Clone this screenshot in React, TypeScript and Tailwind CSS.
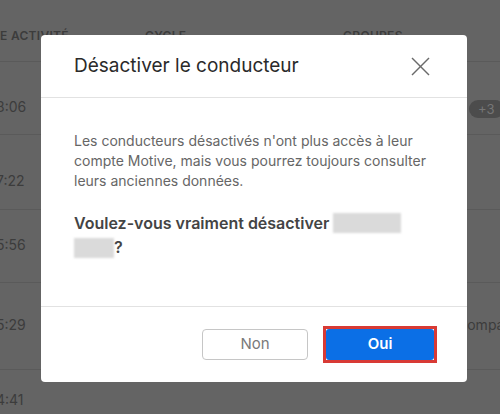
import React from "react";

export default function App() {
  const font = { fontFamily: "Inter, 'Noto Sans', sans-serif" };
  return (
    <div className="relative w-[500px] h-[414px] overflow-hidden bg-[#646464]" style={font}>
      {/* background table */}
      <div className="flex flex-col text-[#3c3c3c]">
        <div className="flex h-[62px] border-b border-[#5a5a5a] pt-[29px] text-[12px] font-semibold leading-[14px] tracking-wide">
          <div className="w-[145px] shrink-0">E ACTIVITÉ</div>
          <div className="w-[198px] shrink-0">CYCLE</div>
          <div className="whitespace-nowrap">GROUPES</div>
        </div>
        <div className="flex h-[73px] border-b border-[#5a5a5a] text-[14px] leading-[20px]">
          <div className="w-[145px] shrink-0 pt-[35px] -ml-[4px]">8:06</div>
          <div className="w-[198px] shrink-0"></div>
          <div className="pl-[130px] pt-[37px] shrink-0">
            <span className="inline-flex h-[18px] items-center rounded-full bg-[#4c4c4c] px-[9px] text-[13px] text-[#767676]">+3</span>
          </div>
        </div>
        <div className="flex h-[75px] border-b border-[#5a5a5a] text-[14px] leading-[20px]">
          <div className="pt-[36px] -ml-[4px]">7:22</div>
        </div>
        <div className="flex h-[73px] border-b border-[#5a5a5a] text-[14px] leading-[20px]">
          <div className="pt-[25px] -ml-[4px]">5:56</div>
        </div>
        <div className="flex h-[87px] border-b border-[#5a5a5a] text-[14px] leading-[20px]">
          <div className="w-[145px] shrink-0 pt-[32px] -ml-[4px]">5:29</div>
          <div className="w-[198px] shrink-0"></div>
          <div className="pl-[118px] pt-[32px] whitespace-nowrap shrink-0">Compagnie</div>
        </div>
        <div className="flex text-[14px] leading-[20px]">
          <div className="pt-[20px] -ml-[4px]">4:41</div>
        </div>
      </div>

      {/* modal */}
      <div className="absolute left-[41px] top-[35px] w-[426px] h-[347px] bg-white rounded-[4px] flex flex-col">
        <div className="h-[63px] flex items-center justify-between pl-[33px] pr-[37px] border-b border-[#e2e2e2] shrink-0">
          <div className="text-[19px] text-[#2a2a2a] leading-[26px]">Désactiver le conducteur</div>
          <svg width="19" height="19" viewBox="0 0 19 19" className="mt-[1px]">
            <line x1="1" y1="1" x2="18" y2="18" stroke="#6a6a6a" strokeWidth="1.4" />
            <line x1="18" y1="1" x2="1" y2="18" stroke="#6a6a6a" strokeWidth="1.4" />
          </svg>
        </div>
        <div className="flex-1 px-[33px] pt-[33px]">
          <p className="text-[14px] leading-[20px] text-[#666666]">
            Les conducteurs désactivés n'ont plus accès à leur compte Motive, mais vous pourrez toujours consulter leurs anciennes données.
          </p>
          <p className="mt-[20px] text-[16px] font-semibold leading-[24px] text-[#444444]">
            Voulez-vous vraiment désactiver{" "}
            <span className="inline-block align-[-4px] w-[68px] h-[20px] bg-[#dadada] blur-[1px]"></span>
            <br />
            <span className="inline-block align-[-5px] w-[40px] h-[20px] bg-[#dadada] blur-[1px]"></span>?
          </p>
        </div>
        <div className="h-[76px] shrink-0 border-t border-[#e2e2e2] flex items-center justify-end gap-[15px] pr-[30px]">
          <button className="w-[106px] h-[31px] rounded-[4px] border border-[#c6c6c6] text-[15px] text-[#7a7a7a] bg-white">
            Non
          </button>
          <div className="border-[3px] border-[#d83a35]">
            <button className="block w-[108px] h-[31px] rounded-[3px] bg-[#0b6fe6] text-[15px] font-semibold text-white">
              Oui
            </button>
          </div>
        </div>
      </div>
    </div>
  );
}
